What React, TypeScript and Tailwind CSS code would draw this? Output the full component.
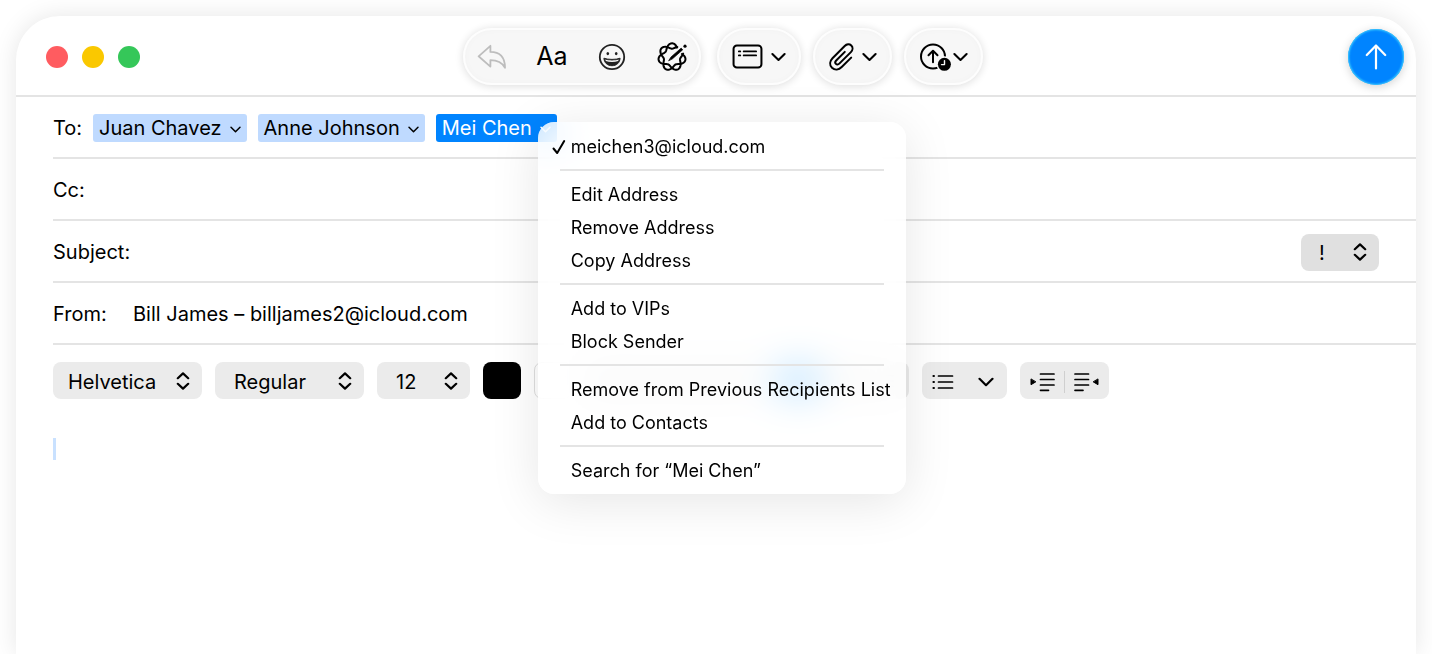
import React from "react";
import { AlignCenter, AlignLeft, AlignRight, Bold, Italic, Strikethrough, Underline } from "lucide-react";

function Chevron({ className }: { className: string }) {
  return (
    <svg viewBox="0 0 16 10" className={className} fill="none" stroke="currentColor" strokeWidth="2.2" strokeLinecap="round" strokeLinejoin="round" aria-hidden="true">
      <path d="M1.5 1.8 8 8.2l6.5-6.4" />
    </svg>
  );
}

function UpDown() {
  return (
    <svg viewBox="0 0 14 18" className="pointer-events-none h-[18px] w-3.5" fill="none" stroke="currentColor" strokeWidth="2.2" strokeLinecap="round" strokeLinejoin="round" aria-hidden="true">
      <path d="M1.8 6.2 7 1.4l5.2 4.8M1.8 11.8 7 16.6l5.2-4.8" />
    </svg>
  );
}

function ReplyIcon() {
  return (
    <svg viewBox="0 0 30 26" className="h-[26px] w-[30px]" fill="none" stroke="currentColor" strokeWidth="1.8" strokeLinejoin="round" aria-hidden="true">
      <path d="M13.4 1.8v6.1c9.2 0 14.6 4.6 14.6 15.9-3-5.4-7-7.6-14.6-7.6v6.4L1.6 12.3z" />
    </svg>
  );
}

function SmileIcon() {
  return (
    <svg viewBox="0 0 28 28" className="size-7" fill="none" stroke="currentColor" aria-hidden="true">
      <circle cx="14" cy="14" r="12.2" strokeWidth="1.8" />
      <ellipse cx="9.8" cy="10.6" rx="1.3" ry="1.7" fill="currentColor" stroke="none" />
      <ellipse cx="18.2" cy="10.6" rx="1.3" ry="1.7" fill="currentColor" stroke="none" />
      <path d="M5.9 15.2c2.4.9 5 1.2 8.1 1.2s5.7-.3 8.1-1.2c-.3 4.5-3.4 7.5-8.1 7.5s-7.8-3-8.1-7.5z" fill="currentColor" strokeWidth="1" strokeLinejoin="round" />
      <path d="M7.3 16.6c2 .7 4.2.9 6.7.9s4.7-.2 6.7-.9l-.5 1.5c-1.9.6-3.9.8-6.2.8s-4.3-.2-6.2-.8z" fill="#f7f7f7" stroke="none" />
    </svg>
  );
}

// Two strands twisted into a ring, left open at the upper right where the pencil sits.
const strand = (phase: number) =>
  Array.from({ length: 121 }, (_, i) => {
    const deg = 73 + (i / 120) * 315;
    const t = (Math.PI / 180) * deg;
    const r = 11 + 2.7 * Math.cos(3.5 * t + phase);
    return `${i ? "L" : "M"}${(15 + r * Math.sin(t)).toFixed(2)} ${(15 - r * Math.cos(t)).toFixed(2)}`;
  }).join("");
const rosette = strand(0) + strand(Math.PI);

function ComposeToolsIcon() {
  return (
    <svg viewBox="0 0 30 30" className="size-[30px]" fill="none" stroke="currentColor" strokeLinecap="round" aria-hidden="true">
      <path d={rosette} strokeWidth="2" strokeLinejoin="round" />
      <path d="m11.8 18.5 2.2-3.5L24.2 6.1l1.5 1.7-10.2 9z" fill="currentColor" strokeWidth=".7" strokeLinejoin="round" />
      <circle cx="28" cy="4.2" r="1.6" fill="currentColor" stroke="none" />
    </svg>
  );
}

function HeaderFieldsIcon() {
  return (
    <svg viewBox="0 0 32 26" className="h-[25px] w-[31px]" fill="none" stroke="currentColor" strokeLinecap="round" aria-hidden="true">
      <rect x="1.5" y="1.5" width="29" height="23" rx="3.5" strokeWidth="2.1" />
      <path d="M7 7.7h1.5M7 11.9h1.5M12 7.7h13M12 11.9h13" strokeWidth="1.8" />
    </svg>
  );
}

function ClipIcon() {
  return (
    <svg viewBox="0 0 26 30" className="h-[30px] w-[26px]" fill="none" stroke="currentColor" strokeWidth="2" strokeLinecap="round" strokeLinejoin="round" aria-hidden="true">
      <path d="M23.2 15.6 13.7 25c-2.9 2.9-6.9 3.3-9.7.7-2.7-2.7-2.3-6.6.5-9.5L16.7 4c2-2 4.8-2.2 6.6-.5 1.8 1.8 1.6 4.6-.4 6.6L11.3 21.6c-1.1 1.1-2.5 1.2-3.4.3s-.8-2.3.3-3.4l8.6-8.6" />
    </svg>
  );
}

function SendLaterIcon() {
  return (
    <svg viewBox="0 0 32 28" className="h-7 w-8" fill="none" stroke="currentColor" strokeLinecap="round" strokeLinejoin="round" aria-hidden="true">
      <circle cx="14" cy="13.5" r="12" strokeWidth="2" />
      <path d="M14 19.2V8M9.5 12.2 14 7.7l4.5 4.5" strokeWidth="2" />
      <circle cx="25.4" cy="21.3" r="8" fill="#f7f7f7" stroke="none" />
      <circle cx="25.4" cy="21.3" r="6.5" fill="currentColor" stroke="none" />
      <path d="M25.5 17.6v4h-3" stroke="#f7f7f7" strokeWidth="1.4" />
    </svg>
  );
}

const glass =
  "flex h-[57px] items-center rounded-full bg-[#f7f7f7] shadow-[0_1px_8px_rgba(0,0,0,0.14),inset_0_0_0_2px_#fdfdfd,inset_0_0_10px_rgba(0,0,0,0.03)]";

function Chip({ name, children }: { name: string; children?: React.ReactNode }) {
  return (
    <div className="relative">
      <button
        type="button"
        className={
          children
            ? "flex h-7 items-center gap-2 rounded-[3px] bg-[#0084ff] px-1.5 text-white"
            : "flex h-7 items-center gap-2 rounded-[3px] bg-[#bfdaff] px-1.5"
        }
      >
        {name}
        <Chevron className="mt-0.5 h-[7px] w-[11px]" />
      </button>
      {children}
    </div>
  );
}

const menuGroups = [
  ["meichen3@icloud.com"],
  ["Edit Address", "Remove Address", "Copy Address"],
  ["Add to VIPs", "Block Sender"],
  ["Remove from Previous Recipients List", "Add to Contacts"],
  ["Search for “Mei Chen”"],
];

function AddressMenu() {
  return (
    <div
      role="menu"
      className="absolute top-2 left-[102px] z-10 w-[368px] rounded-2xl bg-white/80 px-[22px] pt-2 pb-[7px] text-lg text-black shadow-[0_8px_50px_rgba(0,0,0,0.1)] backdrop-blur-[18px]"
    >
      {menuGroups.map((items, g) => (
        <div key={items[0]} className={g ? "mt-1.5 border-t-2 border-[#e4e4e4] pt-[7px]" : ""}>
          {items.map((item) => (
            <button key={item} type="button" role="menuitem" className="relative flex h-[33px] w-full items-center pl-[11px] whitespace-nowrap">
              {g === 0 && (
                <svg viewBox="0 0 14 16" className="absolute -left-2 h-4 w-3.5" fill="none" stroke="currentColor" strokeWidth="2" strokeLinecap="round" strokeLinejoin="round" aria-hidden="true">
                  <path d="m1.5 9.5 3.7 4.5 7-12" />
                </svg>
              )}
              {item}
            </button>
          ))}
        </div>
      ))}
    </div>
  );
}

function Picker({ label, options, className, selectClass }: { label: string; options: string[]; className: string; selectClass: string }) {
  return (
    <div className={`relative flex h-[37px] shrink-0 items-center rounded-lg ${className}`}>
      <select aria-label={label} className={`h-full w-full appearance-none rounded-lg bg-transparent pt-0.5 ${selectClass}`}>
        {options.map((o) => (
          <option key={o}>{o}</option>
        ))}
      </select>
      <span className="pointer-events-none absolute right-3">
        <UpDown />
      </span>
    </div>
  );
}

const row = "ml-[37px] flex h-[62px] items-center border-b-2 border-[#e4e4e4] pt-0.5";
const field = "h-9 min-w-0 flex-1 bg-transparent outline-none";
const tool = "flex h-full flex-1 items-center justify-center";

export default function App() {
  return (
    <main className="flex min-h-screen flex-col overflow-hidden bg-white px-4 pt-4 font-['Inter','Liberation_Sans',sans-serif] text-xl text-black">
      <section className="flex flex-1 flex-col rounded-t-[44px] bg-white shadow-[0_0_24px_rgba(0,0,0,0.1)]">
        <header className="grid h-[81px] grid-cols-[1fr_auto_1fr] items-center border-b-2 border-[#e4e4e4] pt-0.5 pr-3 pl-[26px]">
          <div className="flex gap-3.5 pl-1">
            <button type="button" aria-label="Close" className="size-[22px] rounded-full bg-[#ff5c60]" />
            <button type="button" aria-label="Minimize" className="size-[22px] rounded-full bg-[#fac800]" />
            <button type="button" aria-label="Zoom" className="size-[22px] rounded-full bg-[#35c759]" />
          </div>
          <div className="flex gap-4">
            <div className={`${glass} gap-[30px] px-3.5`}>
              <button type="button" aria-label="Reply" className="w-[30px] text-[#bdbdbd]"><ReplyIcon /></button>
              <button type="button" aria-label="Format" className="flex w-[30px] justify-center text-[25px]">Aa</button>
              <button type="button" aria-label="Emoji" className="flex w-[30px] justify-center text-[#222222]"><SmileIcon /></button>
              <button type="button" aria-label="Writing Tools" className="w-[30px]"><ComposeToolsIcon /></button>
            </div>
            <div className="flex gap-3">
              <button type="button" aria-label="Header fields" className={`${glass} w-[84px] justify-center gap-2`}>
                <HeaderFieldsIcon />
                <Chevron className="h-2.5 w-[15px]" />
              </button>
              <button type="button" aria-label="Attach" className={`${glass} w-[79px] justify-center gap-2`}>
                <ClipIcon />
                <Chevron className="h-2.5 w-[15px]" />
              </button>
              <button type="button" aria-label="Send later" className={`${glass} w-[79px] justify-center gap-0.5`}>
                <SendLaterIcon />
                <Chevron className="h-2.5 w-[15px]" />
              </button>
            </div>
          </div>
          <button type="button" aria-label="Send" className="flex size-14 items-center justify-center justify-self-end rounded-full bg-[#0084ff] text-white shadow-[0_2px_10px_rgba(0,0,0,0.18),inset_0_0_2px_1px_#3ccfff]">
            <svg viewBox="0 0 22 26" className="h-[26px] w-[22px]" fill="none" stroke="currentColor" strokeWidth="2.2" strokeLinecap="round" strokeLinejoin="round" aria-hidden="true">
              <path d="M11 24.5V1.5M1.8 11 11 1.5l9.2 9.5" />
            </svg>
          </button>
        </header>

        <div className={row}>
          <label htmlFor="to" className="w-10">To:</label>
          <div className="flex flex-1 gap-[11px]">
            <Chip name="Juan Chavez" />
            <Chip name="Anne Johnson" />
            <Chip name="Mei Chen">
              <AddressMenu />
            </Chip>
            <input id="to" className="h-7 min-w-0 flex-1 bg-transparent outline-none" />
          </div>
        </div>
        <div className={row}>
          <label htmlFor="cc" className="mr-3">Cc:</label>
          <input id="cc" className={field} />
        </div>
        <div className={`${row} pr-[37px]`}>
          <label htmlFor="subject" className="mr-3">Subject:</label>
          <input id="subject" className={field} />
          <Picker label="Priority" options={["!", "!!", "!!!"]} className="w-[78px] bg-[#e0e0e0]" selectClass="pl-[18px]" />
        </div>
        <div className={row}>
          <label htmlFor="from" className="w-20">From:</label>
          <select id="from" className={`${field} appearance-none`}>
            <option>Bill James – billjames2@icloud.com</option>
          </select>
        </div>

        <div className="flex gap-[13px] px-[37px] pt-[17px]">
          <Picker label="Font" options={["Helvetica"]} className="w-[149px] bg-[#ebebeb]" selectClass="pl-[15px]" />
          <Picker label="Typeface" options={["Regular"]} className="w-[149px] bg-[#ebebeb]" selectClass="pl-[19px]" />
          <Picker label="Size" options={["12"]} className="w-[93px] bg-[#ebebeb]" selectClass="pl-[19px]" />
          <button type="button" aria-label="Text color" className="h-[37px] w-[38px] shrink-0 rounded-lg bg-black" />
          <button type="button" aria-label="Background color" className="h-[37px] w-[38px] shrink-0 rounded-lg border border-[#dedede] bg-white" />
          <div className="flex h-[37px] w-[177px] shrink-0 items-center rounded-lg bg-[#ebebeb] text-gray-400">
            <button type="button" aria-label="Bold" className={tool}><Bold size={18} /></button>
            <button type="button" aria-label="Italic" className={tool}><Italic size={18} /></button>
            <button type="button" aria-label="Underline" className={tool}><Underline size={18} /></button>
            <button type="button" aria-label="Strikethrough" className={tool}><Strikethrough size={18} /></button>
          </div>
          <div className="flex h-[37px] w-[134px] shrink-0 items-center rounded-lg bg-[#ebebeb] text-gray-400">
            <button type="button" aria-label="Align left" className={`${tool} rounded-lg bg-[#0091ff]`}><AlignLeft size={18} className="text-sky-200" /></button>
            <button type="button" aria-label="Align center" className={tool}><AlignCenter size={18} /></button>
            <button type="button" aria-label="Align right" className={tool}><AlignRight size={18} className="text-gray-300" /></button>
          </div>
          <button type="button" aria-label="List style" className="flex h-[37px] w-[85px] shrink-0 items-center justify-between rounded-lg bg-[#ebebeb] pt-0.5 pr-[13px] pl-2.5">
            <svg viewBox="0 0 22 16" className="h-4 w-[22px]" fill="none" stroke="currentColor" strokeWidth="1.7" strokeLinecap="round" aria-hidden="true">
              <path d="M6.5 2h14M6.5 8h14M6.5 14h14" />
              <path d="M1.5 2h.4M1.5 8h.4M1.5 14h.4" strokeWidth="2.2" />
            </svg>
            <Chevron className="h-2.5 w-4" />
          </button>
          <div className="flex h-[37px] w-[89px] shrink-0 items-center rounded-lg bg-[#ebebeb] pt-0.5">
            <button type="button" aria-label="Increase indent" className={tool}>
              <svg viewBox="0 0 26 20" className="h-5 w-[26px]" fill="none" stroke="currentColor" strokeWidth="1.7" strokeLinecap="round" aria-hidden="true">
                <path d="M11.5 2H25M11.5 7.5H25M11.5 13H25M11.5 18.3h8" />
                <path d="M2 7.3v5.4l4.5-2.7z" fill="currentColor" strokeWidth="1" strokeLinejoin="round" />
              </svg>
            </button>
            <span className="h-[22px] w-px bg-[#cfcfcf]" />
            <button type="button" aria-label="Decrease indent" className={tool}>
              <svg viewBox="0 0 26 20" className="h-5 w-[26px]" fill="none" stroke="currentColor" strokeWidth="1.7" strokeLinecap="round" aria-hidden="true">
                <path d="M1 2h13.5M1 7.5h13.5M1 13h13.5M1 18.3h8" />
                <path d="M24 7.3v5.4L19.5 10z" fill="currentColor" strokeWidth="1" strokeLinejoin="round" />
              </svg>
            </button>
          </div>
        </div>

        <div role="textbox" aria-label="Message body" aria-multiline="true" tabIndex={0} className="flex-1 px-[37px] pt-[39px] outline-none">
          <div className="h-[22px] w-[3px] bg-[#c9e1ff]" />
        </div>
      </section>
    </main>
  );
}
